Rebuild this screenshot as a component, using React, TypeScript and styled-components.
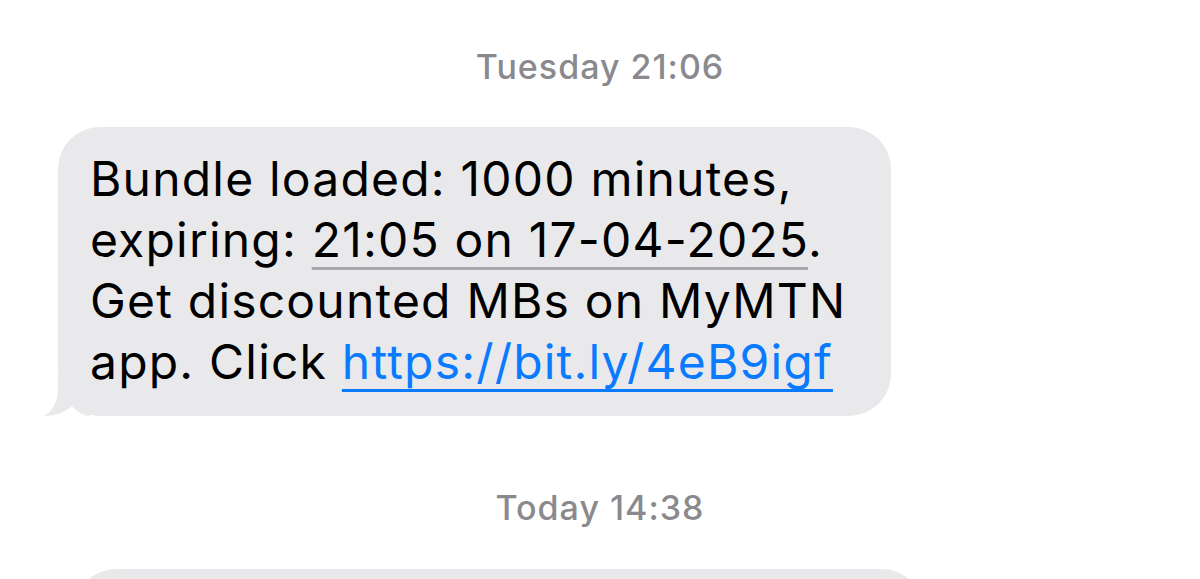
import React from "react";
import styled, { createGlobalStyle } from "styled-components";

const GlobalStyle = createGlobalStyle`
  html, body {
    margin: 0;
    padding: 0;
    background: #ffffff;
    overflow: hidden;
  }
  body {
    font-family: "Inter", "Liberation Sans", sans-serif;
    -webkit-font-smoothing: antialiased;
  }
`;

const Thread = styled.div`
  display: flex;
  flex-direction: column;
  padding-top: 47px;
  width: 1200px;
`;

const Stamp = styled.div<{ $gap: number }>`
  text-align: center;
  font-size: 34px;
  line-height: 40px;
  font-weight: 500;
  letter-spacing: 1px;
  color: #8a8a8e;
  margin-bottom: ${(p) => p.$gap}px;
`;

const Row = styled.div<{ $left: number }>`
  display: flex;
  padding-left: ${(p) => p.$left}px;
`;

const Bubble = styled.div<{ $width: number; $gap?: number }>`
  position: relative;
  box-sizing: border-box;
  width: ${(p) => p.$width}px;
  padding: 21px 20px 24px 32px;
  background: #e9e9eb;
  border-radius: 42px;
  color: #000;
  font-size: 48px;
  line-height: 61px;
  letter-spacing: 1.2px;
  white-space: nowrap;
  margin-bottom: ${(p) => p.$gap ?? 0}px;
`;

const EmptyBubble = styled(Bubble)`
  height: 120px;
`;

const Tail = styled.svg`
  position: absolute;
  left: -18px;
  bottom: 0;
  width: 50px;
  height: 40px;
`;

const DateMark = styled.span`
  text-decoration: underline;
  text-decoration-color: #a8a8ab;
  text-decoration-thickness: 3px;
  text-underline-offset: 10px;
`;

const Link = styled.a`
  color: #0a7bff;
  text-decoration: underline;
  text-decoration-thickness: 3px;
  text-underline-offset: 10px;
`;

const BubbleTail = () => (
  <Tail viewBox="0 0 50 40">
    <path
      d="M18 0 L50 0 L50 40 C44 40 37 36 32 30 C24 37 14 40 4 40 C11 36 18 28 18 12 Z"
      fill="#e9e9eb"
    />
  </Tail>
);

export default function App() {
  return (
    <>
      <GlobalStyle />
      <Thread>
        <Stamp $gap={40}>Tuesday 21:06</Stamp>
        <Row $left={58}>
          <Bubble $width={833} $gap={72}>
            Bundle loaded: 1000 minutes,
            <br />
            expiring: <DateMark>21:05 on 17-04-2025</DateMark>.
            <br />
            Get discounted MBs on MyMTN
            <br />
            app. Click <Link href="#">https://bit.ly/4eB9igf</Link>
            <BubbleTail />
          </Bubble>
        </Row>
        <Stamp $gap={41}>Today 14:38</Stamp>
        <Row $left={74}>
          <EmptyBubble $width={850} />
        </Row>
      </Thread>
    </>
  );
}
